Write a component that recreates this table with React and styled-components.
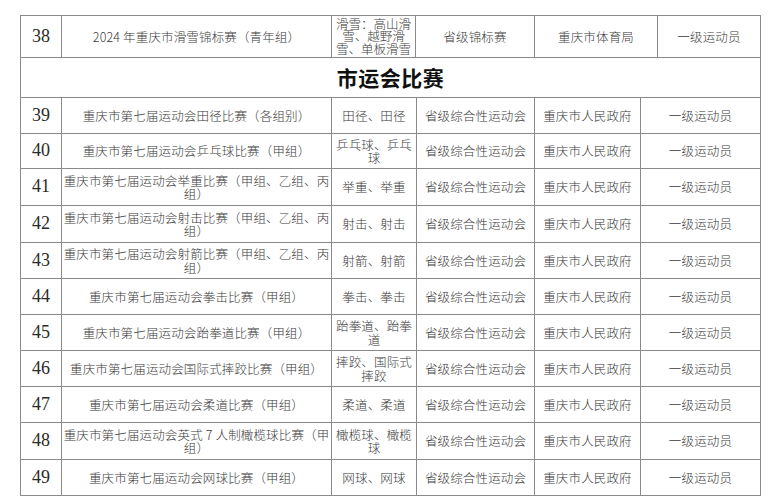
import React from "react";
import styled, { createGlobalStyle } from "styled-components";

const Global = createGlobalStyle`
  html, body { margin: 0; padding: 0; background: #ffffff; }
  body { font-family: "Liberation Serif", "Noto Sans CJK SC", serif; }
`;

const Page = styled.div`
  padding: 15px 0 0 20px;
  width: 778px;
  height: 500px;
  box-sizing: border-box;
  overflow: hidden;
`;

const Table = styled.div`
  display: flex;
  flex-direction: column;
  gap: 1px;
  padding: 1px;
  width: 741px;
  box-sizing: border-box;
  background: #8a8a8a;
`;

const Row = styled.div`
  display: grid;
  grid-template-columns: ${(p) => p.$cols};
  gap: 1px;
  height: ${(p) => p.$h}px;
`;

const Cell = styled.div`
  background: #ffffff;
  display: flex;
  align-items: center;
  justify-content: center;
  text-align: center;
  padding: 0 ${(p) => (p.$tight ? 0 : 2)}px;
  font-family: "Noto Sans CJK SC", sans-serif;
  font-size: 12.5px;
  font-weight: 300;
  line-height: ${(p) => (p.$tight ? 12.6 : 13.5)}px;
  letter-spacing: ${(p) => (p.$tight ? 0 : 0.15)}px;
  color: #3a3a3a;
  white-space: pre;
  min-width: 0;
`;

const NumCell = styled(Cell)`
  font-family: "Liberation Serif", serif;
  font-size: 18px;
  font-weight: 400;
  letter-spacing: 0;
  color: #2a2a2a;
`;

const SectionCell = styled(Cell)`
  grid-column: 1 / -1;
  font-size: 21px;
  font-weight: 700;
  color: #111111;
  letter-spacing: 0.5px;
`;

const FIRST = "40px 269px 83px 118px 122px 102px";
const MAIN = "40px 269px 84px 117px 105px 119px";

const rows = [
  ["39", "重庆市第七届运动会田径比赛（各组别）", "田径、田径", 35],
  ["40", "重庆市第七届运动会乒乓球比赛（甲组）", "乒乓球、乒乓\n球", 34],
  ["41", "重庆市第七届运动会举重比赛（甲组、乙组、丙\n组）", "举重、举重", 36],
  ["42", "重庆市第七届运动会射击比赛（甲组、乙组、丙\n组）", "射击、射击", 36],
  ["43", "重庆市第七届运动会射箭比赛（甲组、乙组、丙\n组）", "射箭、射箭", 35],
  ["44", "重庆市第七届运动会拳击比赛（甲组）", "拳击、拳击", 35],
  ["45", "重庆市第七届运动会跆拳道比赛（甲组）", "跆拳道、跆拳\n道", 35],
  ["46", "重庆市第七届运动会国际式摔跤比赛（甲组）", "摔跤、国际式\n摔跤", 35],
  ["47", "重庆市第七届运动会柔道比赛（甲组）", "柔道、柔道", 35],
  ["48", "重庆市第七届运动会英式 7 人制橄榄球比赛（甲\n组）", "橄榄球、橄榄\n球", 36],
  ["49", "重庆市第七届运动会网球比赛（甲组）", "网球、网球", 35],
];

export default function App() {
  return (
    <>
      <Global />
      <Page>
        <Table>
          <Row $cols={FIRST} $h={41}>
            <NumCell>38</NumCell>
            <Cell>2024 年重庆市滑雪锦标赛（青年组）</Cell>
            <Cell $tight>{"滑雪：高山滑\n雪、越野滑\n雪、单板滑雪"}</Cell>
            <Cell>省级锦标赛</Cell>
            <Cell>重庆市体育局</Cell>
            <Cell>一级运动员</Cell>
          </Row>
          <Row $cols={MAIN} $h={39}>
            <SectionCell>市运会比赛</SectionCell>
          </Row>
          {rows.map(([n, name, sport, h]) => (
            <Row key={n} $cols={MAIN} $h={h}>
              <NumCell>{n}</NumCell>
              <Cell>{name}</Cell>
              <Cell>{sport}</Cell>
              <Cell>省级综合性运动会</Cell>
              <Cell>重庆市人民政府</Cell>
              <Cell>一级运动员</Cell>
            </Row>
          ))}
        </Table>
      </Page>
    </>
  );
}
